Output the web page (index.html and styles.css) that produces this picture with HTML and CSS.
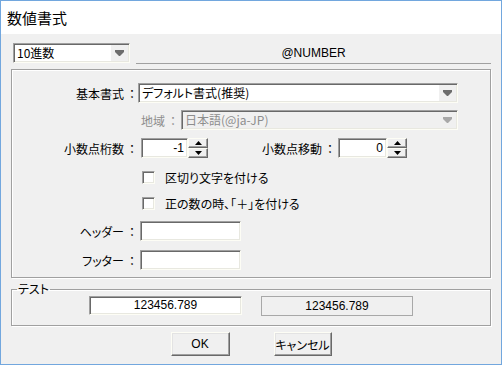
FILE: index.html
```html
<!DOCTYPE html>
<html lang="ja">
<head>
    <meta charset="UTF-8">
    <title>数値書式</title>
    <link rel="stylesheet" href="styles.css">
</head>
<body>

<div class="window">
    <div class="titlebar">数値書式</div>

    <div class="content">
        <div class="top-row">
            <div class="combo combo-kind">
                <span class="combo-text">10進数</span>
                <span class="combo-btn"><svg width="9" height="7" viewBox="0 0 9 7"><path d="M0 0H9V2L5 6H4L0 2Z"/></svg></span>
            </div>
            <div class="format-name">@NUMBER</div>
        </div>

        <div class="group">
            <div class="row row-first">
                <label class="lbl">基本書式<span class="colon">：</span></label>
                <div class="combo combo-base">
                    <span class="combo-text">デフォルト書式(推奨)</span>
                    <span class="combo-btn"><svg width="9" height="7" viewBox="0 0 9 7"><path d="M0 0H9V2L5 6H4L0 2Z"/></svg></span>
                </div>
            </div>

            <div class="row row-locale">
                <label class="lbl lbl-locale">地域<span class="colon">：</span></label>
                <div class="combo combo-locale disabled">
                    <span class="combo-text">日本語(@ja-JP)</span>
                    <span class="combo-btn"><svg width="9" height="7" viewBox="0 0 9 7"><path d="M0 0H9V2L5 6H4L0 2Z"/></svg></span>
                </div>
            </div>

            <div class="row row-digits">
                <label class="lbl">小数点桁数<span class="colon">：</span></label>
                <div class="field num-field digits-field">-1</div>
                <div class="spin">
                    <span class="spin-btn"><svg width="7" height="4" viewBox="0 0 7 4"><path d="M0 4L3.5 0L7 4Z"/></svg></span>
                    <span class="spin-btn"><svg width="7" height="4" viewBox="0 0 7 4"><path d="M0 0H7L3.5 4Z"/></svg></span>
                </div>
                <label class="lbl lbl-shift">小数点移動<span class="colon">：</span></label>
                <div class="field num-field shift-field">0</div>
                <div class="spin">
                    <span class="spin-btn"><svg width="7" height="4" viewBox="0 0 7 4"><path d="M0 4L3.5 0L7 4Z"/></svg></span>
                    <span class="spin-btn"><svg width="7" height="4" viewBox="0 0 7 4"><path d="M0 0H7L3.5 4Z"/></svg></span>
                </div>
            </div>

            <div class="row row-check1">
                <span class="checkbox"></span>
                <span class="check-text">区切り文字を付ける</span>
            </div>

            <div class="row row-check2">
                <span class="checkbox"></span>
                <span class="check-text">正の数の時、「＋」を付ける</span>
            </div>

            <div class="row row-header">
                <label class="lbl">ヘッダー<span class="colon">：</span></label>
                <div class="field text-field"></div>
            </div>

            <div class="row row-footer">
                <label class="lbl">フッター<span class="colon">：</span></label>
                <div class="field text-field"></div>
            </div>
        </div>

        <fieldset class="test">
            <legend>テスト</legend>
            <div class="test-row">
                <div class="field test-input">123456.789</div>
                <div class="test-output">123456.789</div>
            </div>
        </fieldset>

        <div class="buttons">
            <button type="button" class="btn btn-ok">OK</button>
            <button type="button" class="btn btn-cancel">キャンセル</button>
        </div>
    </div>
</div>

</body>
</html>
```

FILE: styles.css
```css
* {
    box-sizing: border-box;
}

body {
    margin: 0;
    font-family: "Liberation Sans", "Noto Sans CJK JP", sans-serif;
    font-size: 12px;
    color: #000;
}

.window {
    width: 502px;
    height: 365px;
    border: 1px solid #72a7de;
    background-color: #f0f0f0;
}

.titlebar {
    height: 33px;
    background-color: #fff;
    padding-left: 6px;
    font-family: "Noto Sans CJK JP", sans-serif;
    font-size: 15px;
    line-height: 33px;
}

.content {
    padding: 0 10px;
}

/* sunken 3d edge used by fields and combos */
.field,
.combo {
    border: 1px solid;
    border-color: #a0a0a0 #fdfdf5 #fdfdf5 #a0a0a0;
    box-shadow: inset 1px 1px #696969, inset -1px -1px #e8e8e0;
    background-color: #fff;
    height: 20px;
    line-height: 18px;
}

.combo {
    display: flex;
    padding: 1px 1px 1px 2px;
    line-height: 16px;
}

.combo-text {
    flex: 1;
    background-color: #fff;
    padding-left: 1px;
    font-family: "Noto Sans CJK JP", sans-serif;
    font-feature-settings: "palt";
    white-space: nowrap;
    overflow: hidden;
}

.combo-btn {
    width: 17px;
    display: flex;
    align-items: center;
    justify-content: center;
    background-color: #f0f0f0;
}

.combo-btn svg {
    fill: #6d6d6d;
}

.combo.disabled,
.combo.disabled .combo-text {
    background-color: #f0f0f0;
    color: #8d8d8d;
}

.combo.disabled .combo-btn svg {
    fill: #a8a8a8;
}

.top-row {
    display: flex;
    margin-top: 9px;
}

.combo-kind {
    width: 117px;
    margin-left: 2px;
}

.format-name {
    flex: 1;
    margin-left: 6px;
    height: 21px;
    line-height: 20px;
    text-align: center;
    border-bottom: 1px solid #a0a0a0;
}

.group {
    margin-top: 5px;
    border: 1px solid #a0a0a0;
    box-shadow: inset 1px 1px #fff, 1px 1px #fff;
    padding: 13px 0 7px 0;
}

.row {
    display: flex;
    align-items: center;
    height: 20px;
}

.row-locale { margin-top: 7px; }
.row-digits { margin-top: 8px; }
.row-check1 { margin-top: 9px; }
.row-check2 { margin-top: 6px; }
.row-header { margin-top: 8px; }
.row-footer { margin-top: 9px; }

.lbl {
    width: 126px;
    text-align: right;
    font-family: "Noto Sans CJK JP", sans-serif;
    font-feature-settings: "palt";
    white-space: nowrap;
}

.colon {
    margin-left: 2px;
    font-feature-settings: normal;
}

.combo-base {
    width: 320px;
}

.lbl-locale {
    width: 167px;
    color: #8d8d8d;
}

.combo-locale {
    width: 277px;
    margin-left: 2px;
}

.num-field {
    text-align: right;
    padding-right: 3px;
}

.digits-field {
    width: 47px;
    margin-left: 3px;
}

.lbl-shift {
    width: 128px;
}

.shift-field {
    width: 49px;
    margin-left: 2px;
}

.spin {
    width: 20px;
    height: 20px;
    display: flex;
    flex-direction: column;
}

.spin-btn {
    height: 10px;
    display: flex;
    align-items: center;
    justify-content: center;
    border: 1px solid;
    border-color: #fdfdf5 #696969 #696969 #fdfdf5;
    box-shadow: inset -1px -1px #a0a0a0;
    background-color: #f0f0f0;
}

.spin-btn svg {
    fill: #000;
}

.checkbox {
    width: 13px;
    height: 13px;
    margin-left: 130px;
    border: 1px solid;
    border-color: #a0a0a0 #fdfdf5 #fdfdf5 #a0a0a0;
    box-shadow: inset 1px 1px #696969, inset -1px -1px #e8e8e0;
    background-color: #fff;
}

.check-text {
    margin-left: 10px;
    font-family: "Noto Sans CJK JP", sans-serif;
    font-feature-settings: "palt";
}

.text-field {
    width: 101px;
    margin-left: 2px;
}

.test {
    margin: 4px 0 0 0;
    padding: 0 0 9px 0;
    min-inline-size: 0;
    border: 1px solid #a0a0a0;
    box-shadow: inset 1px 1px #fff, 1px 1px #fff;
}

.test legend {
    margin-left: 5px;
    padding: 0 1px;
    line-height: 14px;
    font-family: "Noto Sans CJK JP", sans-serif;
    font-feature-settings: "palt";
}

.test-row {
    display: flex;
}

.test-input {
    width: 153px;
    margin-left: 77px;
    height: 19px;
    line-height: 17px;
    text-align: center;
}

.test-output {
    width: 152px;
    height: 20px;
    margin-left: 19px;
    line-height: 18px;
    text-align: center;
    border: 1px solid #a8a8a8;
}

.buttons {
    display: flex;
    justify-content: center;
    gap: 44px;
    margin-top: 6px;
}

.btn {
    height: 24px;
    padding: 0;
    font-family: "Liberation Sans", "Noto Sans CJK JP", sans-serif;
    font-size: 12px;
    font-feature-settings: "palt";
    white-space: nowrap;
    color: #000;
    background-color: #f0f0f0;
    border: 1px solid;
    border-color: #fdfdf5 #696969 #696969 #fdfdf5;
    box-shadow: inset -1px -1px #a0a0a0, inset 1px 1px #e3e3e3;
}

.btn-ok {
    width: 59px;
}

.btn-cancel {
    width: 58px;
}
```
